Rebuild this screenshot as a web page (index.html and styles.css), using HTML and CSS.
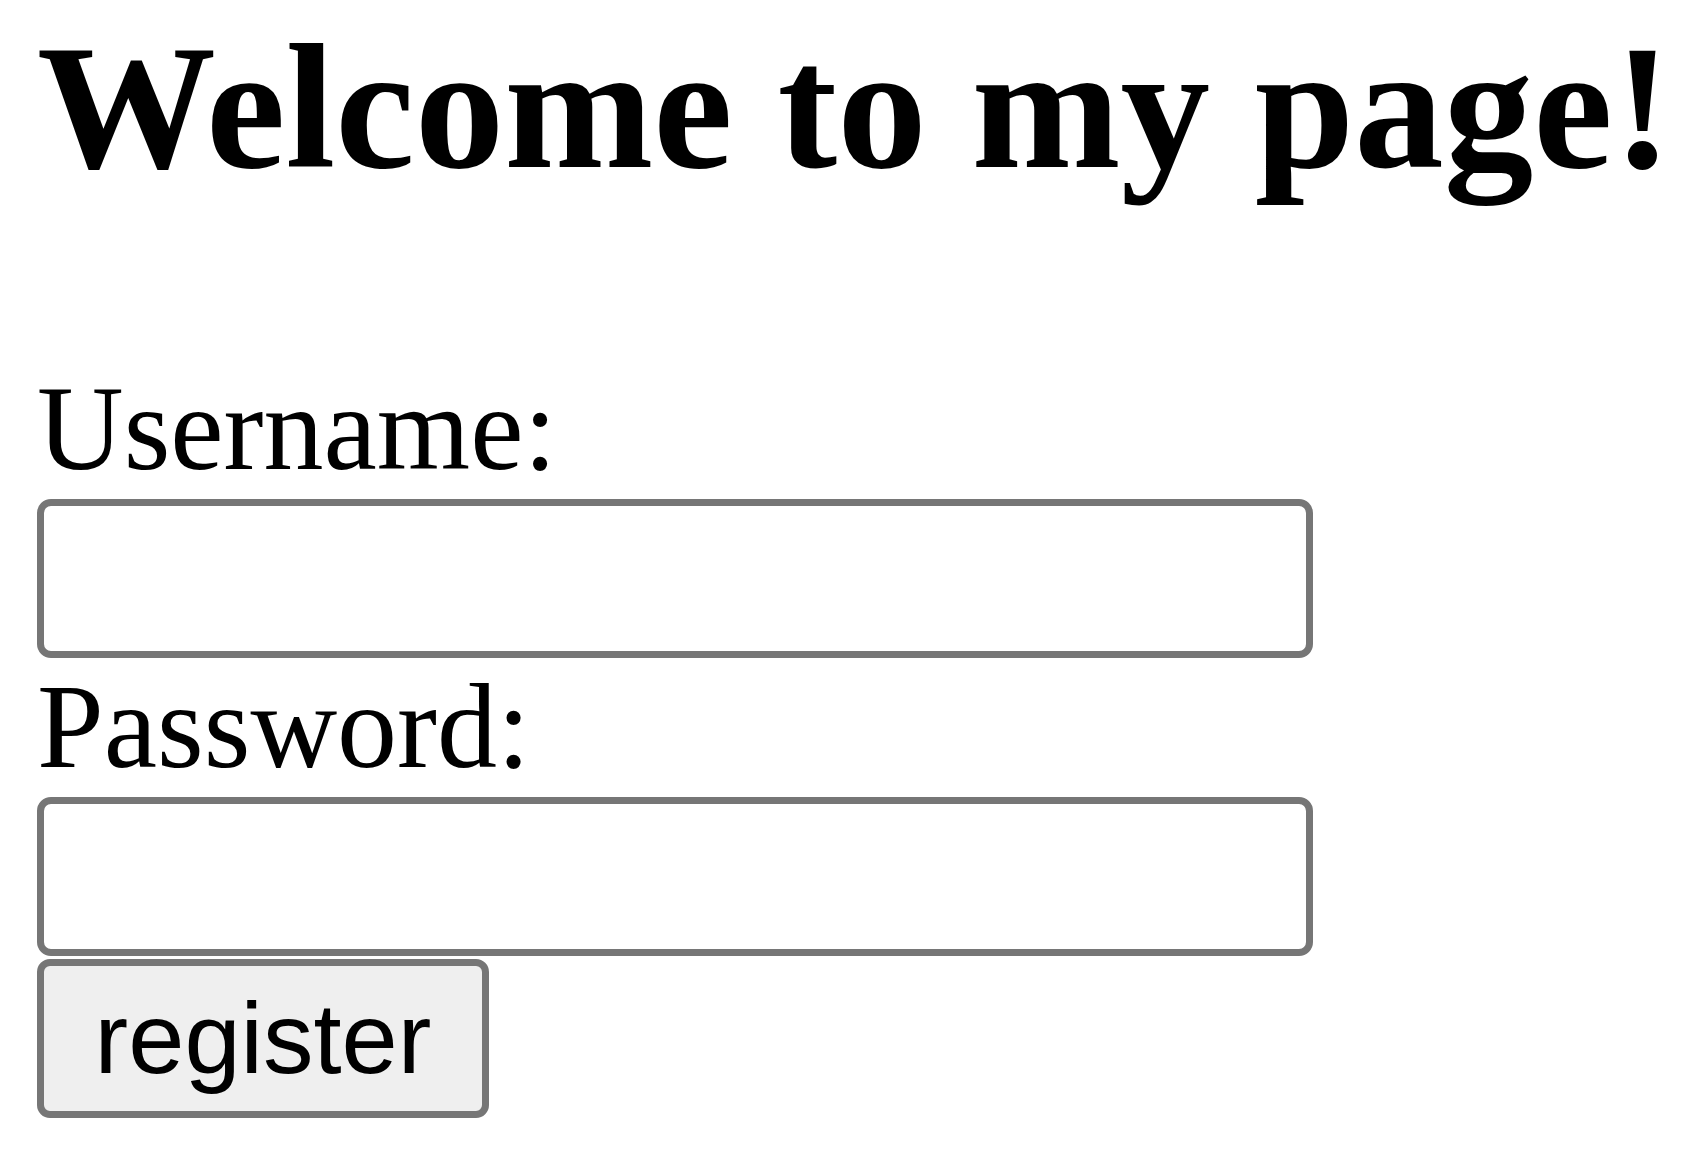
FILE: index.html
```html
<!DOCTYPE html>
<html lang="en">
<head>
<meta charset="utf-8">
<title>Welcome</title>
<link rel="stylesheet" href="styles.css">
</head>
<body>
<div class="page">
  <h1 class="title">Welcome to my page!</h1>
  <form class="form">
    <label class="label" for="username">Username:</label>
    <input class="field" type="text" id="username" name="username">
    <label class="label label-pw" for="password">Password:</label>
    <input class="field" type="password" id="password" name="password">
    <button class="btn" type="submit">register</button>
  </form>
</div>
</body>
</html>
```

FILE: styles.css
```css
html, body {
  margin: 0;
  padding: 0;
  background: #ffffff;
}

.page {
  padding: 7px 0 0 37px;
  font-family: "Liberation Serif", "Times New Roman", serif;
  color: #000;
}

.title {
  margin: 0;
  font-size: 179px;
  line-height: 200px;
  font-weight: bold;
  white-space: nowrap;
}

.form {
  display: flex;
  flex-direction: column;
  align-items: flex-start;
  margin: 155px 0 0 0;
}

.label {
  display: block;
  font-size: 120px;
  line-height: 134px;
  white-space: nowrap;
}

.field {
  box-sizing: border-box;
  width: 1276px;
  height: 159px;
  margin: 3px 0 2px 0;
  padding: 0 20px;
  border: 7px solid #767676;
  border-radius: 14px;
  background: #ffffff;
  font-family: "Liberation Sans", Arial, sans-serif;
  font-size: 101px;
  outline: none;
}

.btn {
  box-sizing: border-box;
  width: 452px;
  height: 159px;
  margin: 1px 0 0 0;
  padding: 0;
  border: 7px solid #767676;
  border-radius: 13px;
  background: #efefef;
  color: #000;
  font-family: "Liberation Sans", Arial, sans-serif;
  font-size: 101px;
  line-height: 145px;
  text-align: center;
}
```
